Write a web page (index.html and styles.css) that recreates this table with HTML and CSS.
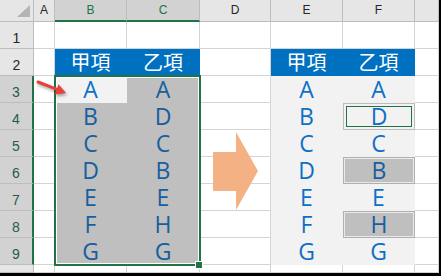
FILE: index.html
```html
<!DOCTYPE html>
<html>
<head>
<meta charset="utf-8">
<link rel="stylesheet" href="styles.css">
</head>
<body>
<div class="frame">
<div class="sheet">
  <div class="cor"><span class="tri"></span></div>
  <div class="ch">A</div><div class="ch sel">B</div><div class="ch sel">C</div><div class="ch">D</div><div class="ch">E</div><div class="ch">F</div><div class="ch"></div>

  <div class="rh">1</div><div class="c"></div><div class="c"></div><div class="c"></div><div class="c"></div><div class="c"></div><div class="c"></div><div class="c"></div>

  <div class="rh">2</div><div class="c"></div><div class="c hd">甲項</div><div class="c hd">乙項</div><div class="c"></div><div class="c hd">甲項</div><div class="c hd">乙項</div><div class="c"></div>

  <div class="rh sel">3</div><div class="c"></div><div class="c act">A</div><div class="c s">A</div><div class="c"></div><div class="c lt">A</div><div class="c lt">A</div><div class="c"></div>

  <div class="rh sel">4</div><div class="c"></div><div class="c s">B</div><div class="c s">D</div><div class="c"></div><div class="c lt">B</div><div class="c lt fb"><div class="box-g"><span class="box-g-in">D</span></div></div><div class="c"></div>

  <div class="rh sel">5</div><div class="c"></div><div class="c s">C</div><div class="c s">C</div><div class="c"></div><div class="c lt">C</div><div class="c lt">C</div><div class="c"></div>

  <div class="rh sel">6</div><div class="c"></div><div class="c s">D</div><div class="c s">B</div><div class="c"></div><div class="c lt">D</div><div class="c lt fb"><div class="box-s">B</div></div><div class="c"></div>

  <div class="rh sel">7</div><div class="c"></div><div class="c s">E</div><div class="c s">E</div><div class="c"></div><div class="c lt">E</div><div class="c lt">E</div><div class="c"></div>

  <div class="rh sel">8</div><div class="c"></div><div class="c s">F</div><div class="c s">H</div><div class="c"></div><div class="c lt">F</div><div class="c lt fb"><div class="box-s">H</div></div><div class="c"></div>

  <div class="rh sel">9</div><div class="c"></div><div class="c s">G</div><div class="c s">G</div><div class="c"></div><div class="c lt">G</div><div class="c lt">G</div><div class="c"></div>

  <div class="rh"></div><div class="c"></div><div class="c"></div><div class="c"></div><div class="c"></div><div class="c"></div><div class="c"></div><div class="c"></div>

  <div class="selection"></div>
  <div class="handle"></div>

  <svg class="red-arrow" width="36" height="26" viewBox="0 0 36 26">
    <line x1="4" y1="6" x2="23" y2="13.3" stroke="#e8403a" stroke-width="3" stroke-linecap="round"/>
    <polygon points="32,17 20.9,18.5 24.5,8.2" fill="#e8403a"/>
  </svg>

  <svg class="big-arrow" width="48" height="80" viewBox="0 0 48 80">
    <polygon points="1,21 24,21 24,1 46,40 24,79 24,60 1,60" fill="#f4b183"/>
  </svg>
</div>
</div>
</body>
</html>
```

FILE: styles.css
```css
html, body {
  margin: 0;
  padding: 0;
  background: #ffffff;
}

.frame {
  width: 439px;
  height: 273px;
  border-right: 2px solid #000;
  border-bottom: 3px solid #000;
  overflow: hidden;
}

.sheet {
  position: relative;
  display: grid;
  grid-template-columns: 34px 21px 72px 73px 71px 72px 72px 24px;
  grid-template-rows: 22px repeat(9, 27px) 8px;
  font-family: "Liberation Sans", Arial, sans-serif;
}

.sheet > div {
  box-sizing: border-box;
}

.cor {
  background: #e6e6e6;
  border-right: 1px solid #bdbdbd;
  border-bottom: 1px solid #bdbdbd;
  position: relative;
}

.tri {
  position: absolute;
  right: 3px;
  bottom: 4px;
  width: 0;
  height: 0;
  border-left: 13px solid transparent;
  border-bottom: 12px solid #b4b4b4;
}

.ch {
  background: #e6e6e6;
  border-right: 1px solid #bdbdbd;
  border-bottom: 1px solid #bdbdbd;
  color: #262626;
  font-size: 12px;
  display: flex;
  align-items: center;
  justify-content: center;
  padding-bottom: 1px;
}

.ch.sel {
  background: #d2d2d2;
  color: #217346;
  border-bottom: 2px solid #217346;
}

.rh {
  background: #e6e6e6;
  border-right: 1px solid #bdbdbd;
  border-bottom: 1px solid #bdbdbd;
  color: #262626;
  font-size: 14px;
  display: flex;
  align-items: center;
  justify-content: center;
  padding-top: 5px;
}

.rh.sel {
  background: #d2d2d2;
  color: #1f5c4a;
  border-right: 2px solid #217346;
}

.c {
  border-right: 1px solid #d4d4d4;
  border-bottom: 1px solid #d4d4d4;
  display: flex;
  align-items: center;
  justify-content: center;
  font-family: "Open Sans", "Noto Sans", sans-serif;
  font-size: 23px;
  color: #0f6fc6;
  line-height: 1;
}

.hd {
  background: #0070c0;
  border-color: #0070c0;
  color: #ffffff;
  font-family: "Noto Sans CJK TC", "Noto Sans CJK SC", sans-serif;
  font-size: 20px;
}

.s {
  background: #bfbfbf;
  border-color: #bfbfbf;
  color: #175e9e;
}

.act {
  background: #f2f2f2;
  border-color: #f2f2f2;
}

.lt {
  background: #f2f2f2;
  border-color: #f2f2f2;
}

.fb {
  border: none;
}

.box-g {
  width: 100%;
  height: 100%;
  box-sizing: border-box;
  border: 1px solid #bdbdbd;
  padding: 2px;
  display: flex;
}

.box-g-in {
  flex: 1;
  border: 1px solid #217346;
  display: flex;
  align-items: center;
  justify-content: center;
}

.box-s {
  width: 100%;
  height: 100%;
  box-sizing: border-box;
  border: 1px solid #b0b0b0;
  box-shadow: inset 0 0 0 1px #e9e9e9;
  background: #bfbfbf;
  color: #175e9e;
  display: flex;
  align-items: center;
  justify-content: center;
}

.selection {
  position: absolute;
  left: 54px;
  top: 75px;
  width: 147px;
  height: 191px;
  box-sizing: border-box;
  border: 2px solid #217346;
  box-shadow: inset 0 0 0 1px #ffffff;
  pointer-events: none;
}

.handle {
  position: absolute;
  left: 195px;
  top: 261px;
  width: 8px;
  height: 8px;
  box-sizing: border-box;
  background: #217346;
  border: 1px solid #ffffff;
}

.red-arrow {
  position: absolute;
  left: 34px;
  top: 76px;
  filter: drop-shadow(1px 2px 1.5px rgba(0, 0, 0, 0.35));
}

.big-arrow {
  position: absolute;
  left: 212px;
  top: 131px;
}
```
